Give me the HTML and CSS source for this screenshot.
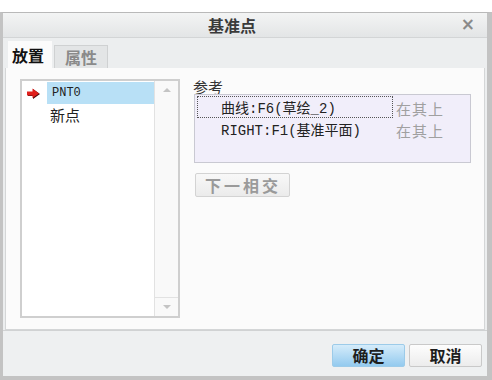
FILE: index.html
```html
<!DOCTYPE html>
<html>
<head>
<meta charset="utf-8">
<link rel="stylesheet" href="styles.css">
</head>
<body>
<div class="dialog">
  <div class="titlebar">
    <span class="title">基准点</span>
    <span class="close">×</span>
  </div>
  <div class="tabs">
    <div class="tab active">放置</div>
    <div class="tab">属性</div>
  </div>
  <div class="panel">
    <div class="list">
      <div class="items">
        <div class="item selected">
          <svg class="marker" width="14" height="12" viewBox="0 0 14 12">
            <path d="M1 4 H6 V1 L13 6 L6 11 V8 H1 Z" fill="#4a0d0d"/>
            <path d="M0 3.5 H5.5 V0.5 L12 5.5 L5.5 10 V7.5 H0 Z" fill="#e0201c"/>
          </svg>
          <span class="label hl">PNT0</span>
        </div>
        <div class="item"><span class="label cjk">新点</span></div>
      </div>
      <div class="scrollbar">
        <div class="arrow up"></div>
        <div class="track"></div>
        <div class="arrow down"></div>
      </div>
    </div>
    <div class="right">
      <div class="reflabel">参考</div>
      <div class="refbox">
        <div class="row">
          <div class="c1 focus">曲线:F6(草绘_2)</div>
          <div class="c2">在其上</div>
        </div>
        <div class="row">
          <div class="c1">RIGHT:F1(基准平面)</div>
          <div class="c2">在其上</div>
        </div>
      </div>
      <div class="nextbtn">下一相交</div>
    </div>
  </div>
  <div class="footer">
    <div class="btn ok">确定</div>
    <div class="btn cancel">取消</div>
  </div>
</div>
</body>
</html>
```

FILE: styles.css
```css
html, body {
  margin: 0;
  padding: 0;
  background: #ffffff;
}
body {
  font-family: "Liberation Serif", "Noto Sans CJK SC", serif;
  font-size: 12px;
  color: #222;
}
.dialog {
  margin-top: 12px;
  width: 492px;
  height: 368px;
  box-sizing: border-box;
  border-top: 1px solid #b9b9b9;
  border-left: 3px solid #c3c3c3;
  border-right: 5px solid #c3c3c3;
  border-bottom: 4px solid #c3c3c3;
  background: #eceeef;
  display: flex;
  flex-direction: column;
}
.titlebar {
  height: 24px;
  flex: none;
  position: relative;
  display: flex;
  align-items: center;
  justify-content: center;
  background: linear-gradient(#f3f4f4, #e3e5e6);
  border-bottom: 1px solid #d3d5d6;
}
.title {
  font-family: "Noto Sans CJK SC", sans-serif;
  font-weight: bold;
  font-size: 16px;
  line-height: 20px;
  color: #3a3a3a;
  margin-left: -26px;
}
.close {
  position: absolute;
  right: 12px;
  top: 1px;
  font-family: "DejaVu Sans", sans-serif;
  font-weight: bold;
  font-size: 17px;
  color: #8a8a8a;
}
.tabs {
  height: 30px;
  flex: none;
  display: flex;
  align-items: flex-end;
  padding-left: 5px;
  gap: 2px;
}
.tab {
  font-family: "Noto Sans CJK SC", sans-serif;
  font-weight: bold;
  font-size: 16px;
  height: 23px;
  line-height: 22px;
  padding: 0 10px;
  box-sizing: border-box;
  color: #8a8a8a;
  background: #e3e5e6;
  border: 1px solid #cfd1d2;
  border-bottom: none;
}
.tab.active {
  height: 27px;
  line-height: 26px;
  color: #111;
  background: #fbfbfb;
  border-color: #fbfbfb;
  padding: 0 7px 0 3px;
}
.panel {
  height: 262px;
  flex: none;
  box-sizing: border-box;
  margin: 0 2px 0 2px;
  background: #fbfbfb;
  border: 1px solid #d4d6d7;
  border-top: none;
  display: flex;
  padding: 11px 0 0 14px;
  gap: 13px;
}
.list {
  width: 160px;
  height: 239px;
  box-sizing: border-box;
  border: 2px solid #cfcfcf;
  background: #ffffff;
  display: flex;
}
.items {
  flex: 1;
  padding-top: 1px;
}
.item {
  height: 22px;
  display: flex;
  align-items: center;
  position: relative;
  padding-left: 25px;
}
.marker {
  position: absolute;
  left: 5px;
  top: 6px;
}
.label {
  font-family: "Liberation Mono", "Noto Sans CJK SC", monospace;
  font-size: 12px;
  padding-left: 5px;
  height: 22px;
  line-height: 22px;
  flex: 1;
  color: #222;
}
.label.cjk {
  font-family: "Noto Sans CJK SC", sans-serif;
  font-size: 15px;
  padding-left: 3px;
}
.label.hl {
  background: #b8e0f6;
}
.scrollbar {
  width: 23px;
  border-left: 1px solid #e2e2e2;
  background: #f9f9f9;
  display: flex;
  flex-direction: column;
}
.arrow {
  height: 18px;
  position: relative;
}
.arrow.down {
  border-top: 1px solid #e2e2e2;
}
.arrow::after {
  content: "";
  position: absolute;
  left: 8px;
  top: 7px;
  border-left: 4px solid transparent;
  border-right: 4px solid transparent;
}
.arrow.up::after {
  border-bottom: 4px solid #c4c4c4;
}
.arrow.down::after {
  border-top: 4px solid #c4c4c4;
}
.track {
  flex: 1;
}
.right {
  display: flex;
  flex-direction: column;
}
.reflabel {
  font-family: "Noto Sans CJK SC", sans-serif;
  font-size: 15px;
  line-height: 15px;
  color: #333;
  height: 15px;
}
.refbox {
  width: 277px;
  height: 69px;
  box-sizing: border-box;
  border: 1px solid #c9c9d2;
  background: #f1eefa;
  padding: 1px 2px;
  margin-left: 1px;
}
.row {
  display: flex;
  height: 22px;
  align-items: center;
}
.c1 {
  width: 196px;
  height: 22px;
  box-sizing: border-box;
  padding-left: 23px;
  line-height: 21px;
  font-family: "Liberation Mono", "Noto Sans CJK SC", monospace;
  font-size: 14px;
  color: #222;
  border: 1px solid transparent;
  padding-top: 2px;
}
.c1.focus {
  border: 1px dotted #555;
}
.c2 {
  padding-left: 3px;
  font-family: "Noto Sans CJK SC", sans-serif;
  font-size: 15px;
  letter-spacing: 1px;
  line-height: 20px;
  padding-top: 3px;
  color: #a0a0a0;
}
.nextbtn {
  margin-top: 10px;
  margin-left: 2px;
  width: 95px;
  height: 24px;
  box-sizing: border-box;
  border: 1px solid #d3d3d3;
  border-radius: 2px;
  background: linear-gradient(#f8f8f8, #ebebeb);
  font-family: "Noto Sans CJK SC", sans-serif;
  font-weight: bold;
  font-size: 16px;
  letter-spacing: 3px;
  color: #9a9a9a;
  line-height: 22px;
  padding-left: 9px;
}
.footer {
  flex: 1;
  border-top: 1px solid #d0d2d3;
  background: #eef0f1;
  display: flex;
  justify-content: flex-end;
  align-items: flex-start;
  padding: 13px 5px 0 0;
  gap: 4px;
}
.btn {
  width: 73px;
  height: 23px;
  box-sizing: border-box;
  border: 1px solid #c9c9c9;
  border-radius: 2px;
  font-family: "Noto Sans CJK SC", sans-serif;
  font-weight: bold;
  font-size: 16px;
  line-height: 21px;
  text-align: center;
  color: #1e1e1e;
  background: linear-gradient(#fdfdfd, #ececec);
}
.btn.ok {
  width: 73px;
  border-color: #9ccbe9;
  background: linear-gradient(#d5ecfa, #93caef);
}
```
